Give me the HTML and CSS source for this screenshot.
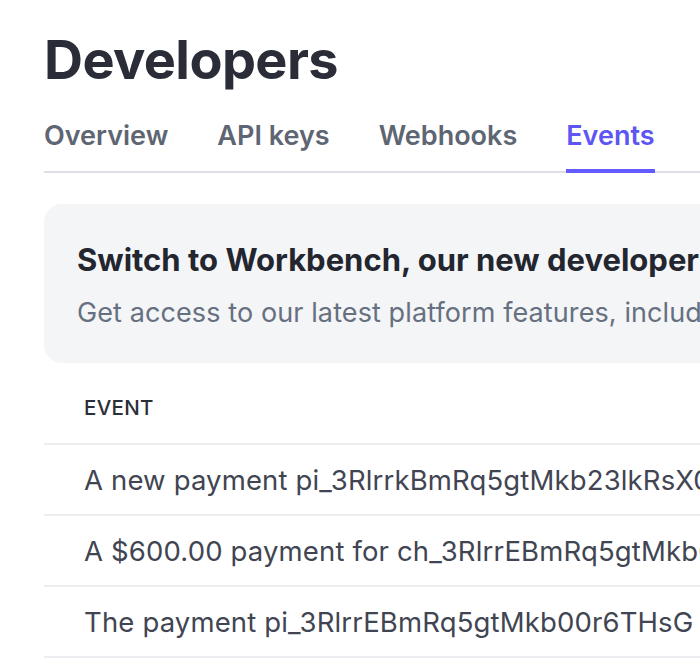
FILE: index.html
```html
<!DOCTYPE html>
<html>
<head>
<meta charset="utf-8">
<link rel="stylesheet" href="styles.css">
</head>
<body>
<div class="page">
  <h1 class="title">Developers</h1>
  <nav class="tabs">
    <a class="tab">Overview</a>
    <a class="tab">API keys</a>
    <a class="tab">Webhooks</a>
    <a class="tab active">Events</a>
    <a class="tab">Logs</a>
  </nav>
  <section class="banner">
    <h2 class="banner-title">Switch to Workbench, our new developer experience</h2>
    <p class="banner-text">Get access to our latest platform features, including improved logs and events.</p>
  </section>
  <div class="table">
    <div class="thead">EVENT</div>
    <div class="row">A new payment pi_3RlrrkBmRq5gtMkb23lkRsX0 for $600.00 was created</div>
    <div class="row">A $600.00 payment for ch_3RlrrEBmRq5gtMkb00r6THsG was captured</div>
    <div class="row">The payment pi_3RlrrEBmRq5gtMkb00r6THsG for $600.00 has succeeded</div>
  </div>
</div>
</body>
</html>
```
FILE: styles.css
```css
html, body {
  margin: 0;
  padding: 0;
  background: #ffffff;
  overflow: hidden;
}
body {
  font-family: Inter, "Noto Sans", sans-serif;
  color: #353a44;
}
.page {
  width: 1400px;
  padding: 28px 0 0 44px;
}
.title {
  margin: 0;
  font-size: 54px;
  line-height: 64px;
  font-weight: 700;
  color: #2a2c38;
  letter-spacing: -0.6px;
}
.tabs {
  display: flex;
  gap: 49px;
  margin-top: 28px;
  border-bottom: 2px solid #dcdfe4;
}
.tab {
  font-size: 27px;
  font-weight: 600;
  color: #5e6573;
  padding: 0 0 17px;
  margin-bottom: -2px;
  border-bottom: 4px solid transparent;
  line-height: 32px;
}
.tab.active {
  color: #5d55f4;
  border-bottom-color: #635bff;
}
.banner {
  margin-top: 31px;
  background: #f4f5f7;
  border-radius: 18px;
  padding: 36px 33px 33px;
}
.banner-title {
  margin: 0;
  font-size: 31px;
  line-height: 40px;
  font-weight: 700;
  color: #23262f;
}
.banner-text {
  margin: 16px 0 0;
  font-size: 27px;
  line-height: 34px;
  color: #667080;
  letter-spacing: 0.1px;
}
.table {
  margin-top: 25px;
}
.thead {
  font-size: 20.5px;
  font-weight: 500;
  color: #2a2e37;
  padding: 8px 40px 23px;
  line-height: 24px;
  letter-spacing: 0.3px;
  border-bottom: 2px solid #ebedf0;
}
.row {
  font-size: 27.5px;
  line-height: 32px;
  padding: 19px 40px 18px;
  color: #414552;
  letter-spacing: 0.15px;
  border-bottom: 2px solid #ebedf0;
  white-space: nowrap;
}
```
